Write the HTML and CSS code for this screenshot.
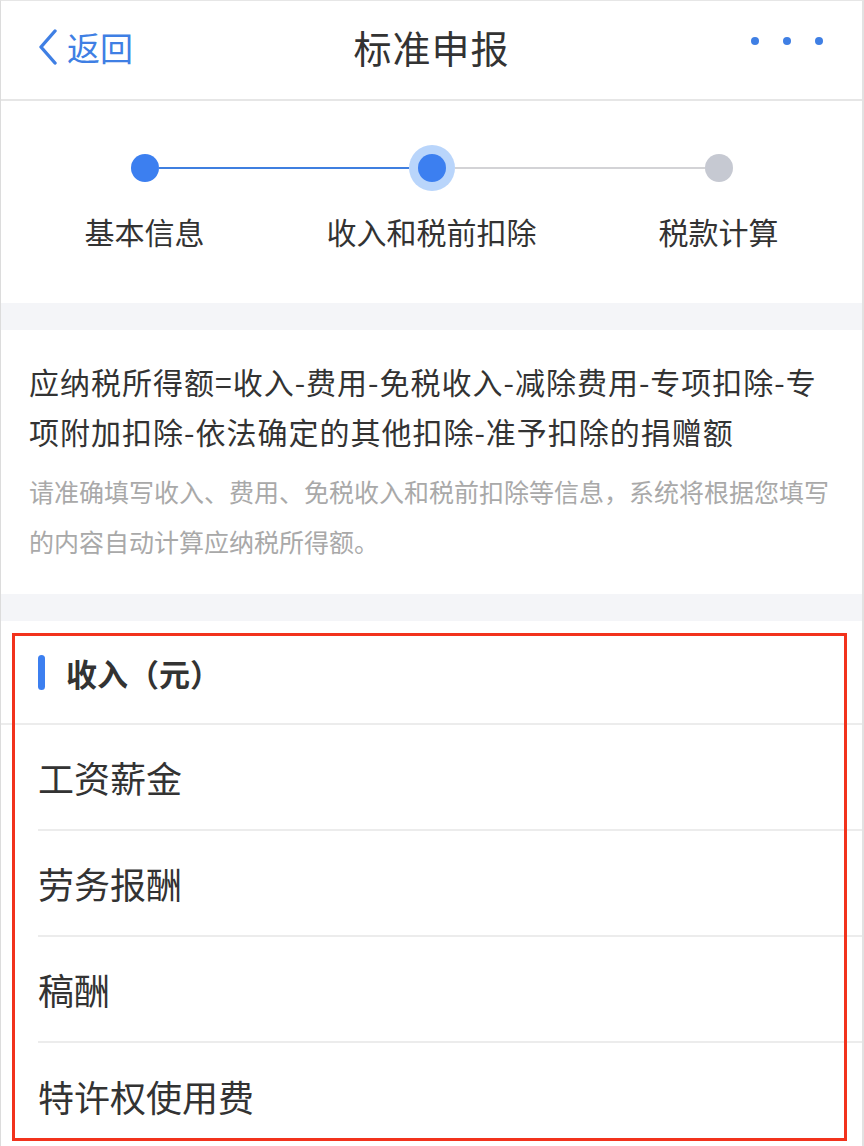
FILE: index.html
```html
<!DOCTYPE html>
<html lang="zh-CN">
<head>
<meta charset="utf-8">
<title>标准申报</title>
<link rel="stylesheet" href="styles.css">
</head>
<body>
<div class="page">
  <header class="topbar">
    <div class="back">
      <svg class="chev" width="22" height="36" viewBox="0 0 22 36"><path d="M18 2 L4 18 L18 34" fill="none" stroke="#3f7fe4" stroke-width="3.4" stroke-linecap="round" stroke-linejoin="round"/></svg>
      <span class="back-text">返回</span>
    </div>
    <div class="title">标准申报</div>
    <div class="more"><i></i><i></i><i></i></div>
  </header>

  <section class="steps">
    <div class="dots-row">
      <span class="dot done"></span>
      <span class="line active"></span>
      <span class="halo"><span class="dot done"></span></span>
      <span class="line"></span>
      <span class="dot todo"></span>
    </div>
    <div class="labels">
      <span>基本信息</span>
      <span>收入和税前扣除</span>
      <span>税款计算</span>
    </div>
  </section>

  <div class="band"></div>

  <section class="formula">
    <p class="main">应纳税所得额=收入-费用-免税收入-减除费用-专项扣除-专项附加扣除-依法确定的其他扣除-准予扣除的捐赠额</p>
    <p class="note">请准确填写收入、费用、免税收入和税前扣除等信息，系统将根据您填写的内容自动计算应纳税所得额。</p>
  </section>

  <div class="band"></div>

  <section class="income">
    <div class="income-head"><span class="bar"></span><span class="head-text">收入（元）</span></div>
    <ul class="items">
      <li>工资薪金</li>
      <li>劳务报酬</li>
      <li>稿酬</li>
      <li>特许权使用费</li>
    </ul>
  </section>

  <div class="highlight"></div>
</div>
</body>
</html>
```

FILE: styles.css
```css
* { box-sizing: border-box; }
html, body { margin: 0; padding: 0; background: #fff; }
body {
  font-family: "Noto Sans CJK SC", "Noto Sans", sans-serif;
  color: #333;
}
.page {
  position: relative;
  width: 864px;
  height: 1146px;
  overflow: hidden;
  border-left: 1px solid #dcdcdc;
  border-right: 2px solid #e2e2e2;
  border-top: 1px solid #e6e6e6;
  background: #fff;
}

/* top bar */
.topbar {
  height: 100px;
  padding: 0 39px 7px 36px;
  display: grid;
  grid-template-columns: 1fr auto 1fr;
  align-items: center;
  border-bottom: 2px solid #e6e6e6;
}
.back { display: flex; align-items: center; gap: 8px; color: #3f7fe4; }
.chev { display: block; }
.back-text { font-size: 33px; line-height: 40px; }
.title { font-size: 38px; line-height: 48px; color: #333; letter-spacing: 1px; margin-left: 3px; }
.more {
  justify-self: end;
  display: flex;
  gap: 24px;
  margin-bottom: 12px;
}
.more i { display: block; width: 8px; height: 8px; border-radius: 50%; background: #3f7fe4; }

/* steps */
.steps { padding: 44px 0 52px; }
.dots-row {
  display: flex;
  align-items: center;
  padding: 0 129px 0 130px;
  height: 46px;
}
.dot { display: block; width: 28px; height: 28px; border-radius: 50%; flex: none; }
.dot.done { background: #3c7ff0; }
.dot.todo { background: #c6c9d2; }
.halo {
  flex: none;
  width: 46px; height: 46px; border-radius: 50%;
  background: #b9d5fb;
  display: flex; align-items: center; justify-content: center;
}
.line { flex: 1; height: 2px; background: #d3d3d6; }
.line.active { background: #3f7fe0; }
.labels {
  margin-top: 20px;
  display: grid;
  grid-template-columns: repeat(3, 1fr);
  text-align: center;
  font-size: 30px;
  line-height: 40px;
  color: #333;
}

.band { height: 27px; background: #f4f5f8; }

/* formula */
.formula { padding: 26px 28px 28px; }
.formula p { margin: 0; }
.formula .main { font-size: 30px; line-height: 50px; color: #333; letter-spacing: 1px; }
.formula .note { margin-top: 10px; font-size: 25px; line-height: 50px; color: #a9a9a9; }

/* income */
.income-head {
  height: 104px;
  display: flex;
  align-items: center;
  padding-left: 37px;
  border-bottom: 2px solid #ececec;
}
.bar { width: 7px; height: 35px; border-radius: 4px; background: #3c7ff0; margin-right: 21px; }
.head-text { font-size: 31px; font-weight: 700; color: #333; }
.items { list-style: none; margin: 0 0 0 37px; padding: 0; }
.items li {
  height: 106px;
  display: flex;
  align-items: center;
  font-size: 36px;
  color: #333;
  border-bottom: 2px solid #ececec;
}
.items li:last-child { border-bottom: none; }

/* annotation overlay */
.highlight {
  position: absolute;
  left: 11px;
  top: 632px;
  width: 835px;
  height: 508px;
  border: 3px solid #f2321c;
  pointer-events: none;
}
```
